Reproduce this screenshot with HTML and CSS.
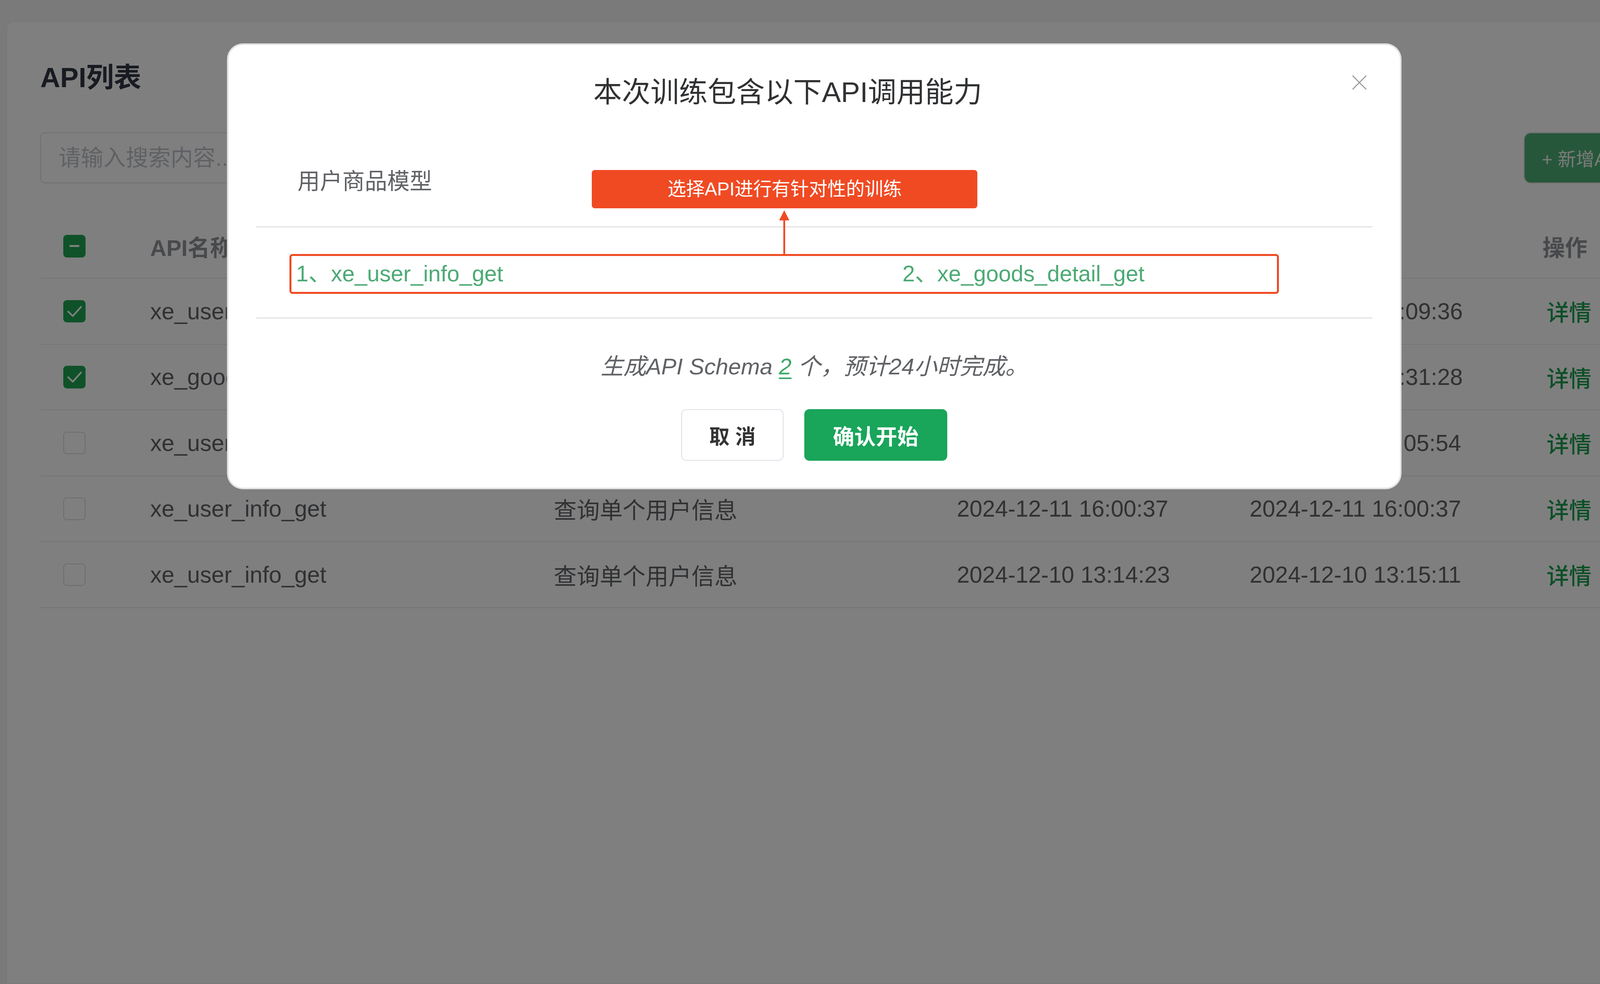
FILE: index.html
```html
<!DOCTYPE html>
<html lang="zh-CN">
<head>
<meta charset="utf-8">
<title>API列表</title>
<link rel="stylesheet" href="styles.css">
</head>
<body>
<main class="page">
  <section class="card">
    <h1 class="card-title">API列表</h1>
    <div class="toolbar">
      <input class="search" type="text" placeholder="请输入搜索内容...">
      <button class="btn-add">+ 新增API</button>
    </div>
    <div class="table">
      <div class="tr th">
        <div class="td"><span class="cb cb-ind"><span class="dash"></span></span></div>
        <div class="td">API名称</div>
        <div class="td">API描述</div>
        <div class="td">创建时间</div>
        <div class="td">更新时间</div>
        <div class="td">操作</div>
      </div>
      <div class="tr">
        <div class="td"><span class="cb cb-on"><svg viewBox="0 0 22 22"><polyline points="4.8,11.2 9.3,15.6 17.4,6.6"/></svg></span></div>
        <div class="td">xe_user_info_get</div>
        <div class="td">查询单个用户信息</div>
        <div class="td">2024-12-12 16:09:36</div>
        <div class="td">2024-12-12 16:09:36</div>
        <div class="td"><span class="link">详情</span></div>
      </div>
      <div class="tr">
        <div class="td"><span class="cb cb-on"><svg viewBox="0 0 22 22"><polyline points="4.8,11.2 9.3,15.6 17.4,6.6"/></svg></span></div>
        <div class="td">xe_goods_detail_get</div>
        <div class="td">查询商品详情</div>
        <div class="td">2024-12-12 10:31:28</div>
        <div class="td">2024-12-12 10:31:28</div>
        <div class="td"><span class="link">详情</span></div>
      </div>
      <div class="tr">
        <div class="td"><span class="cb"></span></div>
        <div class="td">xe_user_list_get</div>
        <div class="td">查询用户列表</div>
        <div class="td">2024-12-11 16:05:54</div>
        <div class="td">2024-12-11 16:05:54</div>
        <div class="td"><span class="link">详情</span></div>
      </div>
      <div class="tr">
        <div class="td"><span class="cb"></span></div>
        <div class="td">xe_user_info_get</div>
        <div class="td">查询单个用户信息</div>
        <div class="td">2024-12-11 16:00:37</div>
        <div class="td">2024-12-11 16:00:37</div>
        <div class="td"><span class="link">详情</span></div>
      </div>
      <div class="tr">
        <div class="td"><span class="cb"></span></div>
        <div class="td">xe_user_info_get</div>
        <div class="td">查询单个用户信息</div>
        <div class="td">2024-12-10 13:14:23</div>
        <div class="td">2024-12-10 13:15:11</div>
        <div class="td"><span class="link">详情</span></div>
      </div>
    </div>
  </section>
</main>

<div class="overlay">
  <div class="modal">
    <button class="close" aria-label="关闭">
      <svg viewBox="0 0 16 16"><path d="M1 1 L15 15 M15 1 L1 15"/></svg>
    </button>
    <h2 class="modal-title">本次训练包含以下API调用能力</h2>
    <div class="group">
      <span class="group-label">用户商品模型</span>
    </div>
    <div class="list-section">
      <div class="api-list">
        <span class="api-item">1、xe_user_info_get</span>
        <span class="api-item">2、xe_goods_detail_get</span>
      </div>
    </div>
    <p class="summary">生成API Schema <span class="count">2</span> 个，预计24小时完成。</p>
    <div class="actions">
      <button class="btn-cancel">取 消</button>
      <button class="btn-ok">确认开始</button>
    </div>
    <div class="annot">选择API进行有针对性的训练</div>
    <svg class="annot-arrow" viewBox="0 0 12 43"><path class="head" d="M6 0 L11 10 L1 10 Z"/><path class="stem" d="M6 9 L6 43"/></svg>
  </div>
</div>
</body>
</html>
```

FILE: styles.css
```css
html, body {
  margin: 0;
  padding: 0;
  overflow: hidden;
  background: #f4f4f5;
}

body {
  zoom: 2.6122;
  font-family: "Liberation Sans", "Noto Sans CJK SC", sans-serif;
  color: #606266;
  width: 1568px;
}

.page {
  width: 1700px;
  height: 963px;
  box-sizing: border-box;
  padding: 21.5px 0 0 7px;
  overflow: hidden;
}

.card {
  width: 1634px;
  height: 960px;
  box-sizing: border-box;
  background: #ffffff;
  border-radius: 6px;
  padding: 36.5px 32.5px 0 32.5px;
  box-shadow: 0 0 0 1px #eeeeef;
}

.card-title {
  margin: 0;
  font-size: 27px;
  line-height: 36px;
  font-weight: 600;
  color: #303642;
}

.toolbar {
  margin-top: 35.8px;
  display: flex;
  align-items: center;
}

.search {
  width: 420px;
  height: 49.7px;
  box-sizing: border-box;
  border: 1px solid #dcdfe6;
  border-radius: 5px;
  padding: 0 0 0 17px;
  font-family: inherit;
  font-size: 22px;
  color: #606266;
  background: #fff;
  outline: none;
}

.search::placeholder {
  color: #bfc2c8;
}

.btn-add {
  margin-left: auto;
  height: 48.6px;
  padding: 0 17px;
  border: none;
  border-radius: 6px;
  background: #4fae77;
  color: #f2f6f3;
  font-family: inherit;
  font-size: 18px;
  box-shadow: 0 0 0 1px rgba(0, 0, 0, 0.12);
}

.table {
  margin-top: 30.5px;
}

.tr {
  display: grid;
  grid-template-columns: 85.2px 395.5px 395px 287px 287px 1fr;
  align-items: center;
  height: 64.5px;
  border-bottom: 1px solid #e9e9ed;
  box-sizing: border-box;
  font-size: 22.5px;
}

.tr.th {
  height: 63px;
  color: #919398;
  font-weight: 600;
  font-size: 22px;
}

.td {
  padding-left: 22.5px;
  white-space: nowrap;
  overflow: hidden;
  display: flex;
  align-items: center;
}

.cb {
  display: inline-flex;
  align-items: center;
  justify-content: center;
  width: 22px;
  height: 22px;
  box-sizing: border-box;
  border: 1px solid #d6d8dd;
  border-radius: 3.5px;
  background: #ffffff;
}

.cb-on,
.cb-ind {
  background: #1ea452;
  border-color: #1ea452;
}

.cb svg {
  width: 22px;
  height: 22px;
  flex: none;
}

.cb polyline {
  fill: none;
  stroke: #ffffff;
  stroke-width: 1.6;
  stroke-linecap: round;
  stroke-linejoin: round;
}

.dash {
  width: 9.5px;
  height: 2px;
  background: #ffffff;
}

.link {
  margin-left: 4px;
  color: #1c9f50;
  font-weight: 500;
  font-size: 22px;
}

/* modal */

.overlay {
  position: fixed;
  inset: 0;
  background: rgba(0, 0, 0, 0.5);
}

.modal {
  position: relative;
  margin: 44px 0 0 224px;
  width: 1148px;
  box-sizing: border-box;
  padding: 26.6px 27px 26.4px 27px;
  background: #ffffff;
  border-radius: 14px;
  box-shadow: 0 0 0 1.5px #e1e1e3;
}

.close {
  position: absolute;
  top: 29px;
  right: 32px;
  width: 15.4px;
  height: 15.4px;
  padding: 0;
  border: none;
  background: transparent;
}

.close svg {
  display: block;
  width: 15.4px;
  height: 15.4px;
}

.close path {
  stroke: #9a9ca2;
  stroke-width: 1.1;
  fill: none;
}

.modal-title {
  margin: 0;
  padding-right: 52px;
  text-align: center;
  font-size: 28px;
  line-height: 40px;
  font-weight: 400;
  color: #303133;
}

.group {
  padding: 52px 0 29px 40.5px;
  border-bottom: 1.3px solid #e3e3e5;
}

.group-label {
  display: block;
  font-size: 22px;
  line-height: 30px;
  color: #606266;
}

.list-section {
  padding: 26px 0 23px 32.5px;
  border-bottom: 1.3px solid #e3e3e5;
}

.api-list {
  width: 970px;
  height: 39px;
  box-sizing: border-box;
  border: 2px solid #f04a23;
  border-radius: 3px;
  padding-left: 4.7px;
  display: grid;
  grid-template-columns: 594.3px 1fr;
  align-items: center;
}

.api-item {
  font-size: 22px;
  line-height: 35px;
  color: #4caa74;
  white-space: nowrap;
}

.summary {
  margin: 32.2px 0 0 0;
  text-align: center;
  font-size: 22.3px;
  line-height: 30px;
  font-style: italic;
  color: #606266;
}

.count {
  color: #3fa86b;
  text-decoration: underline;
  text-decoration-thickness: 1.5px;
  text-underline-offset: 3px;
}

.actions {
  margin-top: 26.9px;
  display: flex;
  justify-content: center;
  gap: 20.5px;
}

.btn-cancel,
.btn-ok {
  height: 50.2px;
  border-radius: 5px;
  font-family: inherit;
  font-weight: 600;
  padding: 0;
}

.btn-cancel {
  width: 100px;
  border: 1px solid #dcdfe6;
  background: #ffffff;
  color: #333333;
  font-size: 20px;
}

.btn-ok {
  width: 140px;
  border: none;
  background: #19a55a;
  color: #ffffff;
  font-size: 21px;
}

.annot {
  position: absolute;
  left: 356px;
  top: 122.5px;
  width: 378px;
  height: 37.5px;
  border-radius: 3px;
  background: #f04a23;
  color: #ffffff;
  font-size: 18.2px;
  line-height: 37.5px;
  text-align: center;
}

.annot-arrow {
  position: absolute;
  left: 538.5px;
  top: 162px;
  width: 12px;
  height: 43px;
}

.annot-arrow .head {
  fill: #f04a23;
}

.annot-arrow .stem {
  stroke: #f04a23;
  stroke-width: 1.8;
  fill: none;
}
```
